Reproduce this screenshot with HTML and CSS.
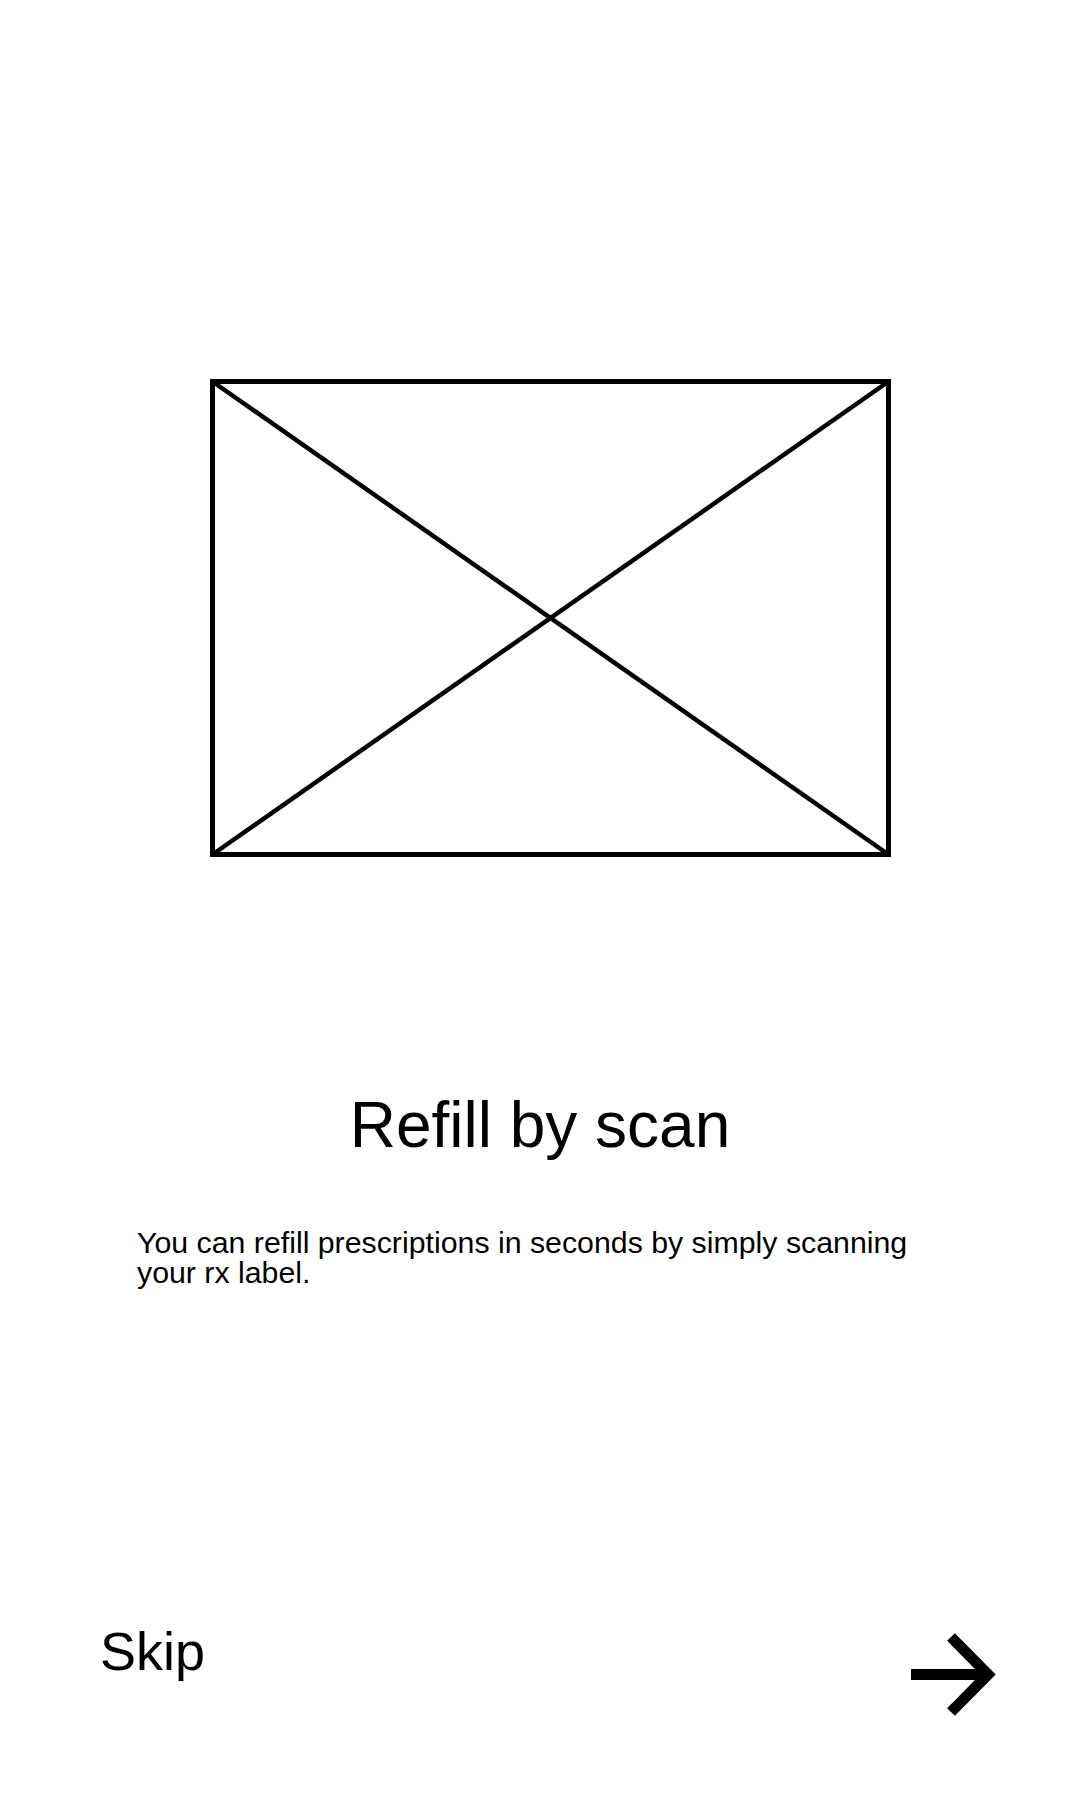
FILE: index.html
```html
<!DOCTYPE html>
<html lang="en">
<head>
<meta charset="utf-8">
<title>Refill by scan</title>
<link rel="stylesheet" href="styles.css">
</head>
<body>
<div class="screen">
  <svg class="hero" width="681" height="478" viewBox="0 0 681 478" aria-hidden="true">
    <rect x="2.5" y="2.5" width="676" height="473" fill="none" stroke="#000" stroke-width="5"/>
    <line x1="2.5" y1="2.5" x2="678.5" y2="475.5" stroke="#000" stroke-width="4.5"/>
    <line x1="678.5" y1="2.5" x2="2.5" y2="475.5" stroke="#000" stroke-width="4.5"/>
  </svg>
  <h1 class="title">Refill by scan</h1>
  <p class="desc">You can refill prescriptions in seconds by simply scanning your rx label.</p>
  <div class="footer">
    <span class="skip">Skip</span>
    <svg class="next" width="96" height="90" viewBox="0 0 96 90" aria-label="Next">
      <line x1="7" y1="42.5" x2="84" y2="42.5" stroke="#000" stroke-width="11"/>
      <polyline points="47,5 84,42.5 47,80" fill="none" stroke="#000" stroke-width="11" stroke-linejoin="miter" stroke-miterlimit="10"/>
    </svg>
  </div>
</div>
</body>
</html>
```

FILE: styles.css
```css
html, body {
  margin: 0;
  padding: 0;
  background: #fff;
}

body {
  font-family: "Liberation Sans", Arial, sans-serif;
  color: #000;
}

.screen {
  width: 1080px;
  height: 1800px;
  display: flex;
  flex-direction: column;
  box-sizing: border-box;
}

.hero {
  display: block;
  margin: 379px 0 0 210px;
}

.title {
  margin: 237px 0 0 0;
  font-size: 64px;
  line-height: 63px;
  font-weight: 400;
  text-align: center;
}

.desc {
  margin: 71px 130px 0 137px;
  font-size: 30.3px;
  line-height: 30px;
}

.footer {
  margin-top: 336px;
  padding: 0 80px 0 100px;
  display: flex;
  justify-content: space-between;
  align-items: flex-start;
}

.skip {
  font-size: 54px;
  line-height: 54px;
}

.next {
  display: block;
  margin-top: 8px;
}
```
